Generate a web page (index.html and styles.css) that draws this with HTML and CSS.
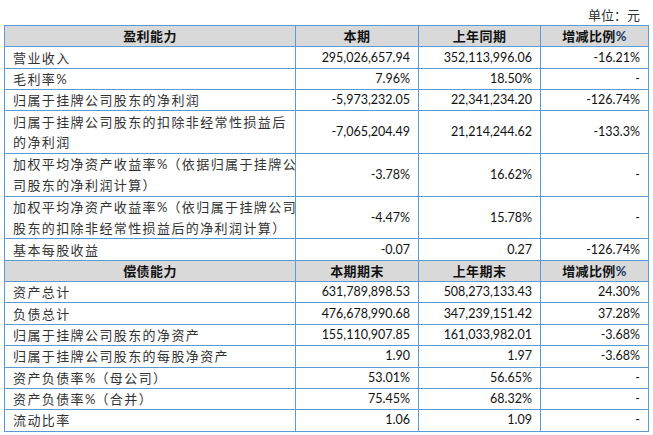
FILE: index.html
```html
<!DOCTYPE html>
<html lang="zh-CN">
<head>
<meta charset="utf-8">
<title>主要财务数据</title>
<link rel="stylesheet" href="styles.css">
</head>
<body>
<div class="page">
  <div class="unit">单位：元</div>
  <table class="fin">
    <colgroup>
      <col class="c1"><col class="c2"><col class="c3"><col class="c4">
    </colgroup>
    <tr class="head">
      <th>盈利能力</th><th>本期</th><th>上年同期</th><th>增减比例<span class="pct">%</span></th>
    </tr>
    <tr><td class="lbl">营业收入</td><td class="num">295,026,657.94</td><td class="num">352,113,996.06</td><td class="num">-16.21%</td></tr>
    <tr><td class="lbl">毛利率<span class="lat">%</span></td><td class="num">7.96%</td><td class="num">18.50%</td><td class="num">-</td></tr>
    <tr><td class="lbl">归属于挂牌公司股东的净利润</td><td class="num">-5,973,232.05</td><td class="num">22,341,234.20</td><td class="num">-126.74%</td></tr>
    <tr class="dbl"><td class="lbl">归属于挂牌公司股东的扣除非经常性损益后<br>的净利润</td><td class="num">-7,065,204.49</td><td class="num">21,214,244.62</td><td class="num">-133.3%</td></tr>
    <tr class="dbl"><td class="lbl">加权平均净资产收益率<span class="lat">%</span>（依据归属于挂牌公<br>司股东的净利润计算）</td><td class="num">-3.78%</td><td class="num">16.62%</td><td class="num">-</td></tr>
    <tr class="dbl"><td class="lbl">加权平均净资产收益率<span class="lat">%</span>（依归属于挂牌公司<br>股东的扣除非经常性损益后的净利润计算）</td><td class="num">-4.47%</td><td class="num">15.78%</td><td class="num">-</td></tr>
    <tr><td class="lbl">基本每股收益</td><td class="num">-0.07</td><td class="num">0.27</td><td class="num">-126.74%</td></tr>
    <tr class="head">
      <th>偿债能力</th><th>本期期末</th><th>上年期末</th><th>增减比例<span class="pct">%</span></th>
    </tr>
    <tr><td class="lbl">资产总计</td><td class="num">631,789,898.53</td><td class="num">508,273,133.43</td><td class="num">24.30%</td></tr>
    <tr><td class="lbl">负债总计</td><td class="num">476,678,990.68</td><td class="num">347,239,151.42</td><td class="num">37.28%</td></tr>
    <tr><td class="lbl">归属于挂牌公司股东的净资产</td><td class="num">155,110,907.85</td><td class="num">161,033,982.01</td><td class="num">-3.68%</td></tr>
    <tr><td class="lbl">归属于挂牌公司股东的每股净资产</td><td class="num">1.90</td><td class="num">1.97</td><td class="num">-3.68%</td></tr>
    <tr><td class="lbl">资产负债率<span class="lat">%</span>（母公司）</td><td class="num">53.01%</td><td class="num">56.65%</td><td class="num">-</td></tr>
    <tr><td class="lbl">资产负债率<span class="lat">%</span>（合并）</td><td class="num">75.45%</td><td class="num">68.32%</td><td class="num">-</td></tr>
    <tr><td class="lbl">流动比率</td><td class="num">1.06</td><td class="num">1.09</td><td class="num">-</td></tr>
  </table>
</div>
</body>
</html>
```
FILE: styles.css
```css
html, body {
  margin: 0;
  padding: 0;
  background: #ffffff;
}
.page {
  padding: 0 5px 0 4px;
  font-family: "Noto Sans CJK SC", sans-serif;
  color: #222;
}
.unit {
  height: 25px;
  line-height: 29px;
  text-align: right;
  padding-right: 8px;
  font-size: 13px;
  color: #333;
}
.fin {
  width: 644px;
  border-collapse: collapse;
  table-layout: fixed;
  border: 1px solid #5b9bd5;
}
.c1 { width: 291px; }
.c2 { width: 123px; }
.c3 { width: 122px; }
.c4 { width: 108px; }
.fin tr { height: 21.35px; }
.fin tr.dbl { height: 42.7px; }
.fin th, .fin td {
  border: 1px solid #5b9bd5;
  padding: 0 8px;
  vertical-align: middle;
  white-space: nowrap;
  line-height: 16px;
}
.fin th {
  background: #d9d9d9;
  font-size: 13px;
  font-weight: 700;
  letter-spacing: 0.4px;
  text-align: center;
  color: #111;
}
.pct {
  font-family: "Lato", "Liberation Sans", sans-serif;
  color: #1f3864;
}
.lbl {
  font-size: 13px;
  letter-spacing: 1.4px;
  color: #333;
  padding-left: 8px;
}
.fin tr.dbl .lbl {
  line-height: 20.5px;
}
.lat {
  font-family: "Lato", "Liberation Sans", sans-serif;
  letter-spacing: 0;
}
.num {
  font-family: "Lato", "Liberation Sans", sans-serif;
  font-size: 12.5px;
  text-align: right;
  color: #111;
}
```
